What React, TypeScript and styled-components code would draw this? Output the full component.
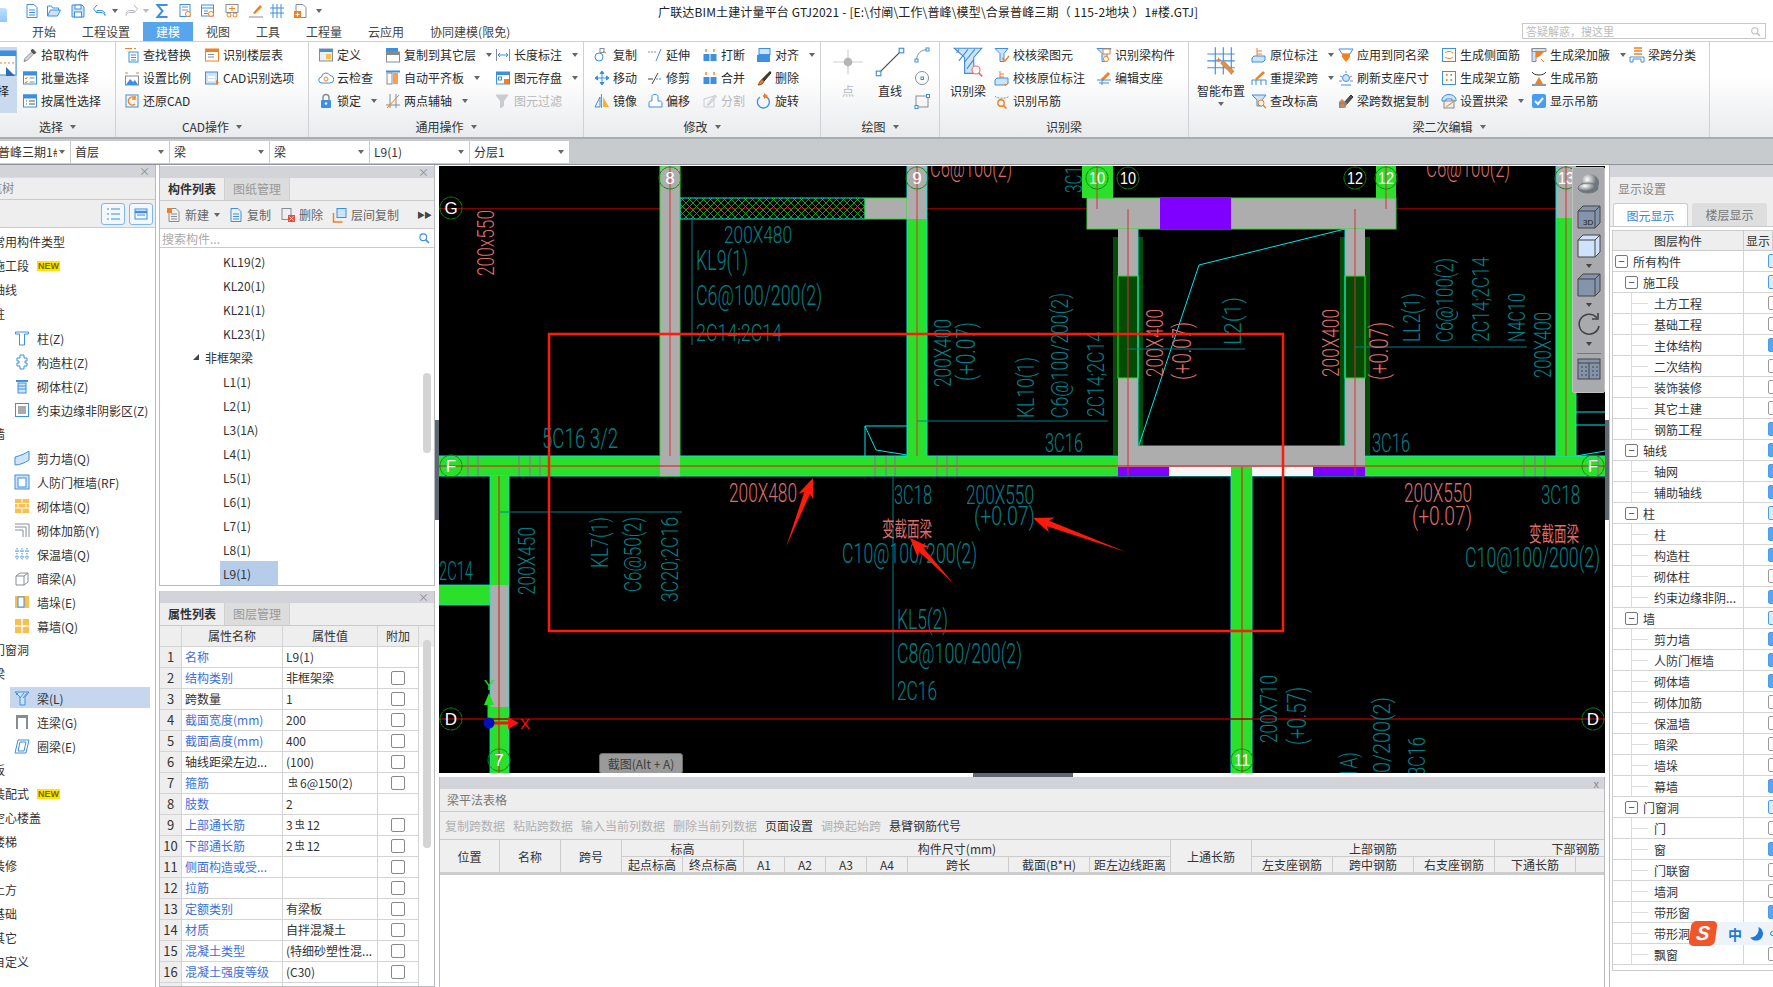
import React from "react";
import styled, { createGlobalStyle } from "styled-components";

const B = "#3d8fe0";
const L = "#cfe3f7";
const O = "#f08020";
const G = "#868c94";
const FONT = `"Noto Sans CJK SC", "Liberation Sans", sans-serif`;

const Global = createGlobalStyle`
  html, body { margin: 0; padding: 0; background: #fff; }
  body { font: 12px ${FONT}; color: #222; }
  * { box-sizing: border-box; }
`;

const ICONS: Record<string, React.ReactNode> = {
  new: <><path d="M3 1.5h7l3 3v10H3z" stroke={G} /><path d="M5 7h6M5 9.5h6M5 12h6" stroke={G} /><rect x="1" y="1" width="5" height="5" fill={O} stroke="none" /></>,
  open: <><path d="M1.5 13V3h4l1 2h6v2" stroke={B} /><path d="M1.5 13l3-6h10l-3 6z" fill={L} /></>,
  disk: <><path d="M2 2h10l2 2v10H2z" fill={L} /><rect x="5" y="2" width="6" height="4" fill="#fff" /><rect x="4.5" y="9" width="7" height="5" fill="#fff" /></>,
  undo: <><path d="M5 2L1.5 6 5 10V7.5h4c3 0 4 2 4 5-1-2-2-3-4-3H5" fill="#fff" /></>,
  redo: <path d="M11 2l3.5 4L11 10V7.5H7c-3 0-4 2-4 5 1-2 2-3 4-3h4" fill="#fff" stroke="#b8bcc2" />,
  sigma: <path d="M12.5 3V2h-9l5 6-5 6h9v-1" strokeWidth="2" />,
  sheetq: <><rect x="2" y="1.5" width="10" height="12" /><path d="M4 4h6M4 7h6" stroke={G} /><circle cx="10" cy="11" r="2.5" stroke={O} fill="#fff" /></>,
  winq: <><rect x="1.5" y="2" width="12" height="11" /><path d="M1.5 5h12M4 8h4M4 10.5h4" /><circle cx="11" cy="11" r="2.5" stroke={O} fill="#fff" /></>,
  glass: <><rect x="2" y="1.5" width="12" height="8" stroke={G} /><path d="M8 3v5M5 5.5h6" stroke={O} /><circle cx="5" cy="12" r="2" stroke={O} /><circle cx="11" cy="12" r="2" stroke={O} /></>,
  brushline: <><path d="M5 10l7-8 2 2-7 7z" fill={O} stroke="none" /><path d="M1 14h14" stroke={G} /></>,
  gridb: <path d="M1 5h14M1 10h14M4 1v14M8 1v14M12 1v14" />,
  filep: <><path d="M3 1.5h7l3 3v10H3z" stroke={G} /><rect x="1" y="8" width="7" height="7" fill={O} stroke="none" /><path d="M4.5 9.5v4M2.5 11.5h4" stroke="#fff" /></>,
  pick: <><path d="M2 14.5l1-3 6-6 2 2-6 6z" fill="#d8d8d8" stroke={G} /><path d="M9 4l1.5-2 3.5 3.5-2 1.5z" fill="#555" stroke="#555" /></>,
  batch: <><rect x="1.5" y="2" width="13" height="12" fill="#fff" /><rect x="1.5" y="2" width="13" height="3" fill={B} /><path d="M3 8l1 1 1.5-2M3 12l1 1 1.5-2" stroke={O} /><path d="M7.5 8h5M7.5 12h5" stroke={G} /></>,
  attr: <><rect x="1.5" y="2" width="13" height="12" fill="#fff" /><rect x="1.5" y="2" width="13" height="3" fill={B} /><path d="M4 8h1M4 11h1M7 8h6M7 11h6" stroke="#555" /></>,
  find: <><path d="M1 1.5h7M10 1.5h2" stroke={O} /><rect x="5" y="5" width="9" height="10" /><path d="M7 8h5M7 10.5h5M7 13h5" /></>,
  table: <><rect x="1.5" y="2" width="13" height="12" fill="#fff" stroke={O} /><rect x="1.5" y="2" width="13" height="3" fill={O} stroke="none" /><path d="M4 7.5h6M4 10h6" stroke={G} /></>,
  scale: <><path d="M1 3h3M12 3h3" stroke={O} /><rect x="1.5" y="6" width="13" height="9" stroke={G} /><path d="M2 15l4-6 3 3 2-2 3 5z" fill={B} stroke="none" /></>,
  cad: <><rect x="1.5" y="2" width="12" height="12" fill={L} /><path d="M4 7h7M4 10h7" stroke="#fff" strokeWidth="2" /><path d="M12 10v5l3-2.5z" fill={O} stroke="none" /></>,
  restore: <><rect x="2" y="2" width="12" height="12" /><path d="M11 5a4 4 0 1 0 0 6M11 3v3H8" stroke={O} strokeWidth="1.4" /></>,
  define: <><rect x="1.5" y="2" width="13" height="12" fill="#eee" stroke={G} /><rect x="1.5" y="2" width="13" height="3" fill={B} stroke="none" /><rect x="8" y="7" width="5" height="5" fill="#f5c04e" stroke="none" /></>,
  floorcopy: <><rect x="1.5" y="1.5" width="11" height="8" fill={B} /><rect x="1.5" y="5" width="13" height="10" fill="#fff" stroke={G} /><rect x="1.5" y="5" width="13" height="3" fill="#888" stroke="none" /></>,
  dim: <><path d="M1.5 2v12M14.5 2v12" stroke={G} /><path d="M3 8h10M5 6L3 8l2 2M11 6l2 2-2 2" /></>,
  cloud: <><path d="M4 13a3 3 0 0 1-.5-6A4.5 4.5 0 0 1 12 5.5 3.7 3.7 0 0 1 12 13z" fill="#fff" /><circle cx="8" cy="9" r="2" stroke={O} /></>,
  alignb: <><path d="M1 1.5h14" stroke={B} strokeWidth="2" /><rect x="2" y="3" width="5" height="11" stroke={G} /><rect x="8" y="3" width="5" height="11" fill={O} fillOpacity=".75" stroke="none" /></>,
  save: <><rect x="1.5" y="2" width="13" height="12" fill="#fff" /><rect x="1.5" y="2" width="13" height="3" fill={B} stroke="none" /><rect x="3.5" y="7" width="3" height="3" /><rect x="9" y="9" width="5" height="5" fill={O} stroke="none" /></>,
  lock: <><rect x="3" y="7" width="10" height="8" rx="1" fill={B} stroke="none" /><path d="M5 7V4.5a3 3 0 0 1 6 0V7" stroke={G} strokeWidth="1.4" /><circle cx="8" cy="10.5" r="1.2" fill="#fff" stroke="none" /></>,
  axis2: <><path d="M1 12h14M5 1v14M11 1v14" stroke={G} /><path d="M2 15L14 2" stroke={O} /></>,
  filter: <path d="M1 2h12L8.5 8v5l-3 2V8z" fill="#c8ccd0" stroke="#c8ccd0" />,
  copy: <><rect x="6" y="1.5" width="4" height="4" stroke={G} /><circle cx="5" cy="10" r="4" /><path d="M9 4l3 2" stroke={O} /></>,
  extend: <><path d="M1 5h9" stroke={G} strokeDasharray="2 1" /><path d="M9 14l5-12" stroke={B} /></>,
  breakb: <><path d="M4 2v3M12 2v3" stroke={O} strokeWidth="1.4" /><rect x="1.5" y="7" width="6" height="7" fill={B} stroke="none" /><rect x="8.5" y="7" width="6" height="7" fill={B} stroke="none" /></>,
  alignblock: <><rect x="3" y="1.5" width="11" height="6" fill={L} /><rect x="1" y="8" width="13" height="7" fill={B} stroke="none" /></>,
  move: <><path d="M8 1v14M1 8h14" /><path d="M8 1L6 3.5h4zM8 15l-2-2.5h4zM1 8l2.5-2v4zM15 8l-2.5-2v4z" fill={B} /></>,
  trim: <><path d="M1 9h5" stroke="#444" /><path d="M9 9h6" stroke={B} strokeDasharray="2 1" /><path d="M5 14l6-11" stroke="#444" /></>,
  del: <><path d="M14 1.5L6 9.5l2 1.5 7-8z" fill="#4a3a2a" stroke="#222" /><path d="M2 15c3 0 5-1 6-4l-2-1.5c-2 1-2 3-4 5.5z" fill={O} stroke="#a04010" /></>,
  mirror: <><path d="M7.5 1v14" stroke={G} /><path d="M9 4v10h6z" fill="#f7b030" stroke="none" /><path d="M6 4v10H1z" stroke={B} /></>,
  offset: <path d="M2 14V9.5c0-1 1-1.5 2-1.5h1V3.5C5 2 6 1.5 8 1.5s3 1 3 2V8h2c1 0 2 1 2 2v4z" fill="#fff" />,
  split: <><path d="M2 14V6l10-3v11z" stroke="#c8ccd0" /><path d="M5 12l8-10 1.5 1.5L7 12z" fill="#ddd" stroke="#c8ccd0" /></>,
  rotate: <><path d="M7 3a6 6 0 1 1-3 1" strokeWidth="1.3" /><path d="M8 0v6l4-3z" fill={O} stroke="none" /></>,
  point: <><path d="M13 3v20M1 13h24" stroke="#d0d0d0" /><circle cx="13" cy="13" r="3.5" fill="#b5b5b5" stroke="none" /></>,
  line: <><path d="M4 24L24 4" stroke="#444" /><rect x="22" y="2" width="4" height="4" fill="#fff" /><rect x="2" y="22" width="4" height="4" fill="#fff" /></>,
  arc: <><path d="M2.5 13C3 6 7 3 13.5 2.5" stroke={G} /><rect x="1" y="12" width="3" height="3" fill="#fff" /><rect x="12" y="1" width="3" height="3" fill="#fff" /></>,
  circ: <><circle cx="8" cy="8" r="6.5" stroke={G} /><rect x="7" y="7" width="2.5" height="2.5" fill="#fff" /></>,
  rect: <><rect x="2" y="3" width="12" height="11" stroke={G} /><rect x="12.5" y="1.5" width="3" height="3" fill="#fff" /><rect x="1" y="12.5" width="3" height="3" fill="#fff" /></>,
  beam: <><path d="M2 2h24l-7 8v14h-8V10z" fill={L} /><path d="M6 3l-2 3M14 3l-8 10M20 3l-9 11M13 20l6-8" /><circle cx="21" cy="21" r="3.5" fill="#fff" stroke="#ee7060" /><path d="M23.5 23.5l3 3" stroke="#ee7060" strokeWidth="1.5" /></>,
  beamchk: <><path d="M1 1.5h13l-4 5v8H6v-8z" fill={L} /><path d="M8 11l3 3 4-5" stroke={O} strokeWidth="1.3" /></>,
  pos: <><path d="M6 1v7M6 4h4M6 7h4" stroke={O} /><path d="M1 10l2-2h11v5l-2 2H1z" fill={L} /><path d="M10 14l2 1.5 3-3" stroke={O} /></>,
  hang: <><path d="M1 3c2 3 12 3 14 0" stroke={G} strokeDasharray="2 1" /><circle cx="7" cy="10" r="3.2" stroke={O} strokeWidth="1.4" /><path d="M9.5 12.5l3 3" stroke={O} strokeWidth="1.6" /></>,
  idbeam: <><path d="M1 1.5h14l-4 5v8H6v-8z" fill={L} /><rect x="7" y="2" width="7" height="5" fill="#fff" stroke={O} /><circle cx="10" cy="12" r="2.5" stroke={O} fill="#fff" /></>,
  brace: <><path d="M5 9l7-7 2 2-7 7z" fill={O} stroke="none" /><path d="M1 10h14M3 13h10M6 10v5" /></>,
  smart: <><path d="M2 7h24M2 13h24M2 19h24M9 1v24M16 1v24M23 1v24" /><path d="M14 15l9 9 2-2-9-9z" fill="#b0a080" stroke={O} /><path d="M12 10v4M10 12h4" stroke={O} /></>,
  yuan: <><path d="M6 1v8M6 4h5M6 7h5" stroke={O} /><path d="M1 11l2-2h11v4l-2 2H1z" fill={L} /></>,
  retake: <><path d="M4 9l8-8 2 2-8 7z" fill={O} stroke="none" /><path d="M1 10h14M1 10v5M15 10v5M5 10v5M10 10v5" /></>,
  height: <><path d="M1 2h14l-4 5v6H6V7z" fill={L} /><circle cx="10" cy="10" r="3" stroke={O} fill="#fff" /><path d="M12 12l3 3" stroke={O} strokeWidth="1.5" /></>,
  apply: <><path d="M1 2h14l-3 5H4z" fill="#fff" /><path d="M4 7h8v3l-4 5-4-5z" fill={O} stroke="none" /></>,
  refresh: <><path d="M8 1v2M2 6l2 1M14 6l-2 1M1 11h3M12 11h3" stroke={G} /><circle cx="8" cy="8" r="3.5" fill={L} /><path d="M3 15h10" /></>,
  span: <><path d="M5 11l8-9 2 2-8 9z" fill="#555" stroke="#333" /><path d="M1 9l3-3 5 5-3 4H1z" fill={O} stroke="none" /><path d="M1 10h8M2 10v5M7 10v5" /></>,
  side: <><rect x="1.5" y="1.5" width="13" height="13" /><path d="M4 6c2-2 6-2 8 0M4 10c2 2 6 2 8 0" stroke={O} /></>,
  stand: <><rect x="1.5" y="1.5" width="13" height="13" /><path d="M5 5h1.5M9.5 5H11M5 10h1.5M9.5 10H11" stroke={O} strokeWidth="2" /></>,
  arch: <><path d="M1 6c2-6 12-6 14 0v2h-4V6H5v2H1z" fill={L} /><rect x="3" y="8" width="10" height="7" fill="#eee" stroke={G} /><path d="M5 14l7-5" stroke={O} /></>,
  haunch: <><path d="M1 1.5h14v3H1zM1 1.5v13h4v-10" fill={L} stroke={G} /><path d="M5 5l9-1-5 5-4 2z" fill={O} stroke="none" /><path d="M10 12l3 3" stroke={O} /></>,
  hanger: <><path d="M1 2c2 4 12 4 14 0" stroke="#333" /><path d="M8 7l-4 7h8z" fill={O} stroke="none" /><path d="M1 15h14" stroke="#333" /></>,
  chk: <><rect x="1" y="1" width="14" height="14" rx="2" fill="#4a9cf0" stroke="none" /><path d="M4 8l3 3 5-6" stroke="#fff" strokeWidth="2" /></>,
  cat: <><path d="M5 1h8M5 4h8M5 7h8" stroke={O} strokeWidth="1.4" /><path d="M1 10h14v5h-3v-3H4v3H1z" fill="#fff" /></>,
  col: <path d="M1.5 2h13v2h-4v11H5.5V4h-4z" fill="#fff" />,
  gz: <path d="M6 1h4v3h3v3h-2v2h2v3h-3v3H6v-3H3V9h2V7H3V4h3z" fill="#fff" />,
  mz: <><path d="M2 2h12v2H2z" fill={B} stroke="none" /><rect x="4" y="5" width="8" height="10" fill={L} /><path d="M4 8h8M4 11h8" /></>,
  edge: <><rect x="1.5" y="1.5" width="13" height="13" fill="#fff" /><rect x="4" y="4" width="8" height="8" fill="#aaa" stroke="none" /></>,
  shear: <path d="M1 7c4-1 10-3 14-6v9c-4 3-10 5-14 5z" fill={L} />,
  rf: <><rect x="1" y="1" width="14" height="14" fill={L} /><rect x="4" y="4" width="8" height="9" fill="#fff" /></>,
  brick: <><rect x="1" y="1" width="14" height="14" fill="#fbbf4d" stroke="none" /><path d="M1 5.5h14M1 10h14M8 1v4.5M4 5.5V10M12 5.5V10M8 10v5" stroke="#fff" /></>,
  rein: <path d="M1 2h14v13M1 5h11v10M1 8h8v7" stroke={G} />,
  insul: <path d="M3 2v12M8 2v12M13 2v12M1 5h14M1 11h14" strokeDasharray="1.5 1" />,
  anl: <><path d="M2 6l4-3h8v9l-4 3H2z" fill="#fff" stroke={G} /><path d="M2 6h8v9M10 6l4-3" stroke={G} /></>,
  duo: <><rect x="1" y="2" width="14" height="12" fill="#fbbf4d" stroke="none" /><rect x="4" y="3" width="6" height="10" fill="#fff" stroke={B} /></>,
  mu: <><rect x="1" y="1" width="14" height="14" fill="#fbbf4d" stroke="none" /><path d="M1 8h14M8 1v14" stroke="#fff" strokeWidth="1.5" /></>,
  beaml: <><path d="M1 2h14l-4 5v8H6V7z" fill={L} /><path d="M4 3L2 5M10 3L6 8M13 3l-4 5" /></>,
  lian: <><rect x="2" y="1" width="12" height="3" fill={G} stroke="none" /><path d="M3 4v11M13 4v11" stroke={G} strokeWidth="2" /></>,
  quan: <path d="M1 15l3-13h11l-3 13zM4 13l2-9h6l-2 9z" fill="#fff" />,
  lst: <path d="M2 3h2M2 8h2M2 13h2M6 3h9M6 8h9M6 13h9" />,
  win: <><rect x="2" y="3" width="12" height="10" /><path d="M2 6h12" strokeWidth="2.5" /><path d="M4 9h8" /></>,
  doc: <><path d="M3 1.5h7l3 3v10H3z" /><path d="M5 7h6M5 9.5h6M5 12h6" /></>,
  cdel: <><rect x="2" y="1.5" width="9" height="11" stroke={G} /><rect x="8" y="8" width="7" height="7" fill="#e05040" stroke="none" /><path d="M9.5 9.5l4 4M13.5 9.5l-4 4" stroke="#fff" /></>,
  fcopy: <><path d="M1.5 6v9h9" stroke={O} strokeWidth="1.5" /><rect x="5" y="1.5" width="9" height="9" fill={L} /></>,
  search: <><circle cx="7" cy="7" r="4.5" strokeWidth="1.5" /><path d="M10.5 10.5l4 4" strokeWidth="2" /></>,
};

const Svg = styled.svg`flex: none; display: block;`;
const Icon = ({ n, s = 16, box = 16, stroke = B }: { n: string; s?: number; box?: number; stroke?: string }) => (
  <Svg width={s} height={s} viewBox={`0 0 ${box} ${box}`} fill="none" stroke={stroke}>{ICONS[n]}</Svg>
);

const Page = styled.div`
  position: relative; width: 1773px; height: 987px; overflow: hidden; background: #fff;
  display: flex; flex-direction: column;
`;

/* title */
const TitleBar = styled.div`height: 22px; flex: none; display: flex; align-items: center; background: #fff; position: relative;`;
const Logo = styled.div`width: 7px; height: 28px; top: 8px; background: linear-gradient(#bfe0ff, #62aef5); border-radius: 0 3px 3px 0; position: absolute; left: 0;`;
const Quick = styled.div`display: flex; align-items: center; margin-left: 24px; width: 634px; flex: none;`;
const QuickBtn = styled.span<{ $mr: number }>`margin-right: ${p => p.$mr}px; display: flex;`;
const Caret = styled.i<{ $c?: string; $ml?: number }>`
  display: inline-block; flex: none; width: 0; height: 0; margin-left: ${p => p.$ml ?? 7}px;
  border-left: 3.5px solid transparent; border-right: 3.5px solid transparent;
  border-top: 4px solid ${p => p.$c ?? "#666"};
`;
const TitleText = styled.div`white-space: pre; font-size: 12px; color: #222; letter-spacing: .15px;`;

/* tabs */
const TabBar = styled.div`height: 19px; flex: none; display: flex; padding-left: 19px; position: relative; background: #fff;`;
const Tab = styled.div<{ $on?: boolean }>`
  padding: 0 13px; line-height: 19px; font-size: 12px; color: ${p => (p.$on ? "#fff" : "#444")};
  background: ${p => (p.$on ? "#58a5ec" : "transparent")};
`;
const HelpBox = styled.div`
  position: absolute; left: 1522px; top: 1px; width: 244px; height: 16px; border: 1px solid #c8c8c8; background: #fff;
  color: #bbb; font-size: 11px; line-height: 14px; padding-left: 3px; display: flex; justify-content: space-between; align-items: center; padding-right: 4px;
`;

/* ribbon */
const Ribbon = styled.div`
  height: 98px; flex: none; display: flex; border-top: 1px solid #cfd1d4; border-bottom: 2px solid #a9acb0;
  background: linear-gradient(#fff 35%, #e9ebed 100%);
`;
const Group = styled.div<{ $w: number }>`
  width: ${p => p.$w}px; flex: none; display: flex; flex-direction: column; position: relative;
  margin-right: 1px; box-shadow: 1px 0 0 #d0d2d5;
`;
const Cols = styled.div<{ $pl?: number }>`height: 75px; display: flex; padding-left: ${p => p.$pl ?? 0}px; padding-top: 1px;`;
const Col = styled.div<{ $w?: number; $ml?: number }>`
  ${p => (p.$w ? `width: ${p.$w}px;` : "")} flex: none; margin-left: ${p => p.$ml ?? 0}px; display: flex; flex-direction: column;
`;
const Item = styled.div<{ $off?: boolean }>`
  height: 23px; display: flex; align-items: center; gap: 3px; white-space: nowrap;
  color: ${p => (p.$off ? "#b6b8bb" : "#2b2b2b")}; font-size: 12px;
`;
const GroupLabel = styled.div`
  height: 19px; display: flex; justify-content: center; align-items: center; color: #333; font-size: 12px;
`;
const Big = styled.div<{ $w: number }>`
  width: ${p => p.$w}px; flex: none; display: flex; flex-direction: column; align-items: center; font-size: 12px; color: #2b2b2b; white-space: nowrap;
`;
const BigIcon = styled.div`height: 32px; margin-top: 3px; margin-bottom: 1px; display: flex; align-items: center;`;
const Pressed = styled.div`
  width: 17px; height: 66px; margin: 4px 5px 0 0; flex: none; background: #c9d9ee; overflow: hidden; display: flex; flex-direction: column;
  align-items: flex-end; font-size: 12px; position: relative;
`;
const PressedIcon = styled.div`margin: 2px 0 0; height: 30px;`;
const PressedGlyph = styled.span`position: absolute; left: -3px; bottom: 15px; line-height: 14px;`;

/* combos */
const ComboBar = styled.div`height: 26px; flex: none; background: #c8cbce; display: flex; align-items: center; gap: 1px; overflow: hidden; border-bottom: 1px solid #8f9296;`;
const Combo = styled.div<{ $w: number; $ml?: number }>`
  width: ${p => p.$w}px; height: 22px; flex: none; margin-left: ${p => p.$ml ?? 0}px; background: #fff; display: flex; align-items: center;
  justify-content: space-between; padding: 0 5px 0 4px; color: #333; font-size: 12px;
`;
const ComboText = styled.span`overflow: hidden; white-space: nowrap;`;

/* main */
const Main = styled.div`flex: 1; display: flex; position: relative; min-height: 0;`;
const Handle = styled.div<{ $x: number }>`position: absolute; left: ${p => p.$x}px; top: 255px; width: 4px; height: 100px; background: #5d6873;`;
const Strip = styled.div`height: 12px; flex: none; background: #d2d4d9; display: flex; justify-content: flex-end; align-items: center; padding-right: 5px; color: #8a8a8a; font-size: 11px; line-height: 12px;`;
const LeftPanel = styled.div`width: 156px; flex: none; border-right: 1px solid #b8babd; display: flex; flex-direction: column; overflow: hidden; margin-right: 3px;`;
const PanelHead = styled.div`height: 23px; flex: none; background: #eee; border-top: 1px solid #ddd; border-bottom: 1px solid #c8cacc; color: #888; line-height: 20px; text-indent: -22px; white-space: nowrap;`;
const LeftTools = styled.div`height: 28px; flex: none; background: #eee; border-bottom: 1px solid #c8cacc; display: flex; justify-content: flex-end; align-items: center; gap: 4px; padding-right: 2px;`;
const ToolBtn = styled.div`width: 24px; height: 22px; border: 1px solid #7db8f0; border-radius: 3px; background: #f2f8fe; display: flex; align-items: center; justify-content: center;`;
const Tree = styled.div`flex: 1; padding-top: 2px; overflow: hidden;`;
const TreeHead = styled.div`height: 24px; line-height: 24px; margin-left: -7px; white-space: nowrap; color: #333; display: flex; align-items: center; gap: 8px;`;
const New = styled.span`font: bold 9px "Liberation Sans", sans-serif; background: #ffe400; color: #7a6a00; padding: 0 1px; line-height: 10px;`;
const TreeItem = styled.div<{ $on?: boolean }>`
  height: 24px; margin-left: 10px; width: 140px; padding-left: 4px; display: flex; align-items: center; gap: 7px; white-space: nowrap; color: #333;
  background: ${p => (p.$on ? "linear-gradient(transparent 1px, #c5d6ee 1px, #c5d6ee 22px, transparent 22px)" : "transparent")};
`;

const MidColumn = styled.div`width: 276px; flex: none; display: flex; flex-direction: column; gap: 5px; margin-right: 4px;`;
const MidPanel = styled.div<{ $h?: number }>`
  ${p => (p.$h ? `height: ${p.$h}px; padding-top: 1px;` : "flex: 1;")} display: flex; flex-direction: column; position: relative; overflow: hidden;
  border-left: 1px solid #b8babd; border-right: 1px solid #b8babd; border-bottom: 1px solid #b8babd;
`;
const TabRow = styled.div`height: 23px; flex: none; background: #eee; display: flex; border-bottom: 1px solid #c8cacc;`;
const PTab = styled.div<{ $on?: boolean }>`
  width: 65px; text-align: center; line-height: 22px; font-weight: ${p => (p.$on ? 700 : 400)};
  color: ${p => (p.$on ? "#333" : "#999")}; background: ${p => (p.$on ? "#eee" : "#dcdcdc")}; border-right: 1px solid #d0d0d0;
`;
const MidTools = styled.div`height: 28px; flex: none; background: #efefef; border-bottom: 1px solid #c8cacc; display: flex; align-items: center; padding: 0 4px 0 6px; color: #666; position: relative;`;
const MidTool = styled.div<{ $w: number }>`width: ${p => p.$w}px; flex: none; display: flex; align-items: center; gap: 3px;`;
const More = styled.span`position: absolute; right: 3px; font-size: 8px; color: #444; letter-spacing: -1px;`;
const SearchRow = styled.div`height: 19px; flex: none; border-bottom: 1px solid #c8cacc; display: flex; align-items: center; justify-content: space-between; padding: 0 4px 0 2px; color: #aaa; background: #fff;`;
const List = styled.div`flex: 1; padding-top: 1px; overflow: hidden;`;
const ListRow = styled.div<{ $on?: boolean; $head?: boolean }>`
  height: 24px; margin-left: ${p => (p.$head ? "30px" : "60px")}; width: ${p => (p.$head ? "auto" : "58px")}; padding-left: 3px; display: flex; align-items: center; gap: 6px;
  color: #333; background: ${p => (p.$on ? "#b5cceb" : "transparent")}; white-space: nowrap;
`;
const Tri = styled.i`display: block; width: 0; height: 0; border-bottom: 6px solid #444; border-left: 6px solid transparent;`;
const Thumb = styled.div<{ $t: number; $h: number }>`position: absolute; right: 3px; top: ${p => p.$t}px; height: ${p => p.$h}px; width: 8px; border-radius: 4px; background: #d4d4d4;`;

const PropHead = styled.div`display: grid; grid-template-columns: 22px 101px 95px 41px; height: 21px; flex: none; background: #eee;`;
const HCell = styled.div`border-right: 1px solid #d4d4d4; border-bottom: 1px solid #d4d4d4; text-align: center; line-height: 20px; color: #333;`;
const PropRow = styled.div`display: grid; grid-template-columns: 22px 101px 95px 41px; height: 21px; flex: none; width: 259px;`;
const Num = styled.div`background: #eee; text-align: center; line-height: 20px; border-right: 1px solid #d4d4d4; border-bottom: 1px solid #d4d4d4; color: #333; font-size: 13px;`;
const Cell = styled.div<{ $blue?: boolean }>`
  border-right: 1px solid #d4d4d4; border-bottom: 1px solid #d4d4d4; line-height: 20px; padding-left: 3px; white-space: nowrap; overflow: hidden;
  color: ${p => (p.$blue ? "#3a6fe0" : "#333")};
`;
const CheckCell = styled.div`border-right: 1px solid #d4d4d4; border-bottom: 1px solid #d4d4d4; display: flex; align-items: center; justify-content: center;`;
const Box = styled.i`display: block; width: 14px; height: 14px; border: 1px solid #888; border-radius: 2px; background: #fff;`;
const Rebar = styled.span`font-size: 10px; position: relative; top: -2px; margin: 0 2px;`;

const Center = styled.div`width: 1166px; flex: none; display: flex; flex-direction: column; gap: 4px; padding-top: 1px; margin-right: 4px; position: relative;`;
const Canvas = styled.div`height: 607px; flex: none; background: #000; position: relative; overflow: hidden;`;
const CadSvg = styled.svg`display: block;`;
const ViewBar = styled.div`
  position: absolute; right: 0; top: 1px; width: 33px; height: 226px; background: #a8aaad; border: 1px solid #c0c0c0; border-radius: 2px;
  display: flex; flex-direction: column; align-items: center; padding-top: 3px;
`;
const ViewBtn = styled.div<{ $h: number }>`height: ${p => p.$h}px; flex: none; display: flex; align-items: center; justify-content: center;`;
const ViewSep = styled.div`width: 24px; height: 1px; flex: none; background: #777;`;
const Tip = styled.div`
  position: absolute; left: 160px; bottom: -1px; width: 84px; height: 21px; background: #9a9a9a; border: 1px solid #6c6c6c; border-radius: 3px;
  color: #3c3c3c; text-align: center; line-height: 19px; box-shadow: 1px 2px 2px rgba(0,0,0,.3); font-size: 12px;
`;
const Grip = styled.div`position: absolute; left: 534px; top: 608px; width: 100px; height: 4px; background: #5d6873;`;
const Bottom = styled.div`flex: 1; display: flex; flex-direction: column; overflow: hidden; border-left: 1px solid #b8babd; border-right: 1px solid #b8babd; min-height: 0;`;
const BHead = styled.div`height: 23px; flex: none; background: #eee; border-bottom: 1px solid #c8cacc; color: #777; line-height: 21px; padding-left: 7px;`;
const BTools = styled.div`height: 28px; flex: none; background: #eee; border-bottom: 1px solid #c8cacc; display: flex; align-items: center; gap: 8px; padding-left: 5px;`;
const BTool = styled.span<{ $on?: boolean }>`color: ${p => (p.$on ? "#333" : "#b0b0b0")}; white-space: nowrap;`;
const Matrix = styled.div`
  height: 35px; flex: none; background: #efefef; border-bottom: 2px solid #ccc; display: grid; overflow: hidden;
  grid-template-columns: 60px 61px 61px 61px 61px 41px 41px 41px 41px 101px 81px 81px 81px 81px 81px 81px 81px 81px;
  grid-template-rows: 17px 16px;
`;
const MCell = styled.div<{ $c?: string; $r?: string }>`
  grid-column: ${p => p.$c ?? "auto"}; grid-row: ${p => p.$r ?? "auto"};
  border-right: 1px solid #ccc; border-bottom: 1px solid #ccc; display: flex; align-items: center; justify-content: center; white-space: nowrap; overflow: hidden; color: #333; font-size: 12px;
`;

const RightPanel = styled.div`flex: 1; min-width: 0; border-left: 1px solid #b8babd; display: flex; flex-direction: column; overflow: hidden;`;
const RHead = styled.div`height: 24px; flex: none; background: #eee; color: #888; line-height: 24px; padding-left: 8px; font-size: 12px;`;
const RTabs = styled.div`height: 26px; flex: none; background: #eee; display: flex; padding: 2px 0 0 3px; gap: 4px; border-bottom: 1px solid #c8cacc;`;
const RTab = styled.div<{ $on?: boolean }>`
  width: 75px; text-align: center; line-height: 23px; border-radius: 3px 3px 0 0; color: ${p => (p.$on ? "#3b87e0" : "#777")};
  background: ${p => (p.$on ? "#fff" : "#dedede")}; border: ${p => (p.$on ? "1px solid #ccc" : "none")}; border-bottom: none;
`;
const LayerTable = styled.div`margin: 3px 0 0 2px; border: 1px solid #ccc; border-right: none; height: 741px; overflow: hidden;`;
const LayerHead = styled.div`height: 20px; background: #eee; display: grid; grid-template-columns: 131px 1fr; border-bottom: 1px solid #ccc; line-height: 19px; text-align: center; color: #333;`;
const LayerHCell = styled.div`border-right: 1px solid #ccc; white-space: nowrap; overflow: hidden;`;
const LayerRow = styled.div`height: 21px; display: grid; grid-template-columns: 131px 1fr; border-bottom: 1px solid #d4d4d4;`;
const LayerName = styled.div<{ $lv: number }>`
  position: relative; border-right: 1px solid #d4d4d4; display: flex; align-items: center; gap: 5px; color: #333; white-space: nowrap;
  padding-left: ${p => [2, 12, 41][p.$lv]}px;
  &::before {
    content: ${p => (p.$lv === 2 ? '""' : "none")}; position: absolute; left: 18px; top: 10px; width: 17px; height: 1px; background: #ddd;
  }
  &::after {
    content: ${p => (p.$lv === 2 ? '""' : "none")}; position: absolute; left: 18px; top: 0; width: 1px; height: 21px; background: #ddd;
  }
`;
const Minus = styled.i`
  display: flex; align-items: center; justify-content: center; width: 13px; height: 13px; border: 1px solid #777; border-radius: 2px; background: #fff;
  font-style: normal; font-size: 11px; line-height: 1; color: #333; flex: none;
`;
const LayerCheck = styled.div`padding-left: 24px; display: flex; align-items: center;`;
const Mark = styled.i<{ $s: number }>`
  display: block; width: 14px; height: 14px; border-radius: 2px; flex: none;
  border: 1px solid ${p => (p.$s === 0 ? "#999" : "#4a9cf0")};
  background: ${p => (p.$s === 1 ? "#5aa4f4" : p.$s === 2 ? "#dbeafc" : "#fff")};
`;
const Ime = styled.div`
  position: absolute; left: 1690px; top: 920px; width: 83px; height: 27px; display: flex; align-items: center;
`;
const ImeLogo = styled.div`
  width: 26px; height: 25px; background: #f0562a; border-radius: 5px; transform: skew(-8deg); color: #fff; font: italic bold 20px "Liberation Sans", sans-serif;
  display: flex; align-items: center; justify-content: center; flex: none; z-index: 1;
`;
const ImeBar = styled.div`
  margin-left: -3px; flex: 1; height: 23px; background: #eef3fa; display: flex; align-items: center; gap: 7px; padding-left: 15px; color: #1e78dc; font-weight: 700; font-size: 14px; white-space: nowrap;
`;
const ImeDot = styled.i`width: 5px; height: 5px; border: 1.5px solid #1e78dc; border-radius: 50%; display: block; flex: none;`;

/* ---------- data ---------- */
type It = [string, string, number?];
const col = (items: It[], w?: number, ml?: number) => (
  <Col $w={w} $ml={ml}>
    {items.map(([ic, t, f]) => (
      <Item key={ic + t} $off={f === 2}>
        <Icon n={ic} />
        {t}
        {f === 1 && <Caret />}
      </Item>
    ))}
  </Col>
);

const big = (ic: string, t: string, w: number, box = 28, off = false, drop = false) => (
  <Big $w={w}>
    <BigIcon><Icon n={ic} s={32} box={box} /></BigIcon>
    <Item $off={off}>{t}</Item>
    {drop && <Caret $ml={0} />}
  </Big>
);

const leftTree: [number, string, string?, boolean?][] = [
  [0, "常用构件类型"], [2, "施工段"], [0, "轴线"], [0, "柱"],
  [1, "柱(Z)", "col"], [1, "构造柱(Z)", "gz"], [1, "砌体柱(Z)", "mz"], [1, "约束边缘非阴影区(Z)", "edge"],
  [0, "墙"], [1, "剪力墙(Q)", "shear"], [1, "人防门框墙(RF)", "rf"], [1, "砌体墙(Q)", "brick"], [1, "砌体加筋(Y)", "rein"],
  [1, "保温墙(Q)", "insul"], [1, "暗梁(A)", "anl"], [1, "墙垛(E)", "duo"], [1, "幕墙(Q)", "mu"],
  [0, "门窗洞"], [0, "梁"], [1, "梁(L)", "beaml", true], [1, "连梁(G)", "lian"], [1, "圈梁(E)", "quan"],
  [0, "板"], [2, "装配式"], [0, "空心楼盖"], [0, "楼梯"], [0, "装修"], [0, "土方"], [0, "基础"], [0, "其它"], [0, "自定义"],
];

const R = <Rebar>虫</Rebar>;
const props: [string, string, boolean, React.ReactNode, boolean][] = [
  ["1", "名称", true, "L9(1)", false],
  ["2", "结构类别", true, "非框架梁", true],
  ["3", "跨数量", false, "1", true],
  ["4", "截面宽度(mm)", true, "200", true],
  ["5", "截面高度(mm)", true, "400", true],
  ["6", "轴线距梁左边...", false, "(100)", true],
  ["7", "箍筋", true, <>{R}6@150(2)</>, true],
  ["8", "肢数", true, "2", false],
  ["9", "上部通长筋", true, <>3{R}12</>, true],
  ["10", "下部通长筋", true, <>2{R}12</>, true],
  ["11", "侧面构造或受...", true, "", true],
  ["12", "拉筋", true, "", true],
  ["13", "定额类别", true, "有梁板", true],
  ["14", "材质", true, "自拌混凝土", true],
  ["15", "混凝土类型", true, "(特细砂塑性混...", true],
  ["16", "混凝土强度等级", true, "(C30)", true],
  ["", "", false, "", true],
];

const layers: [number, string, number][] = [
  [0, "所有构件", 2], [1, "施工段", 2], [2, "土方工程", 0], [2, "基础工程", 0], [2, "主体结构", 1], [2, "二次结构", 0], [2, "装饰装修", 0], [2, "其它土建", 0], [2, "钢筋工程", 1],
  [1, "轴线", 1], [2, "轴网", 1], [2, "辅助轴线", 1],
  [1, "柱", 2], [2, "柱", 1], [2, "构造柱", 1], [2, "砌体柱", 0], [2, "约束边缘非阴...", 1],
  [1, "墙", 2], [2, "剪力墙", 1], [2, "人防门框墙", 1], [2, "砌体墙", 1], [2, "砌体加筋", 0], [2, "保温墙", 0], [2, "暗梁", 0], [2, "墙垛", 0], [2, "幕墙", 1],
  [1, "门窗洞", 2], [2, "门", 0], [2, "窗", 1], [2, "门联窗", 0], [2, "墙洞", 0], [2, "带形窗", 1], [2, "带形洞", 0], [2, "飘窗", 0],
];

/* ---------- CAD drawing, in page coordinates ---------- */
const TEAL = "#008088";
const SAL = "#dc6e6a";
const CFONT = "Roboto, 'Liberation Sans', sans-serif";
const CJKF = "'Liberation Serif', 'Noto Sans CJK SC', serif";

const T = ({ x, y, w, h, c = TEAL, t }: { x: number; y: number; w: number; h: number; c?: string; t: string }) => (
  <text x={x} y={y} fontSize={h * 1.38} fontFamily={CFONT} fontWeight={300} fill={c} textLength={w} lengthAdjust="spacingAndGlyphs">{t}</text>
);
/* text running bottom-to-top, centred on line x, from y2 (start) up to y1 (end) */
const V = ({ x, y1, y2, h = 18, c = TEAL, t }: { x: number; y1: number; y2: number; h?: number; c?: string; t: string }) => {
  const bx = x + h / 2;
  return (
    <text transform={`rotate(-90 ${bx} ${y2})`} x={bx} y={y2} fontSize={h * 1.38} fontFamily={CFONT} fontWeight={300} fill={c} textLength={y2 - y1} lengthAdjust="spacingAndGlyphs">{t}</text>
  );
};
const Axis = ({ x, y, t }: { x: number; y: number; t: string }) => (
  <g>
    <circle cx={x} cy={y} r={11} fill="none" stroke="#0a8a0a" strokeDasharray="5.5 .6" />
    <text x={x} y={y + 6} fontSize={17} fontFamily="'Liberation Sans', sans-serif" fill="#fff" textAnchor="middle" textLength={t.length > 1 ? 16 : undefined} lengthAdjust="spacingAndGlyphs">{t}</text>
  </g>
);
const arrow = (tx: number, ty: number, bx: number, by: number) => {
  const len = Math.hypot(tx - bx, ty - by);
  const dx = (tx - bx) / len, dy = (ty - by) / len;
  const nx = -dy, ny = dx;
  const p = (a: number, n: number) => `${(tx - dx * a + nx * n).toFixed(1)},${(ty - dy * a + ny * n).toFixed(1)}`;
  return [p(0, 0), p(20, 8), p(16, 3), `${bx},${by}`, p(16, -3), p(20, -8)].join(" ");
};
const GREEN = "#2be02b";
const GRAY = "#adadad";
const CYAN = "#00e6e6";
const RED = "#e01010";
const DRED = "#a00000";

const Drawing = () => (
  <CadSvg width={1166} height={607} viewBox="439 166 1166 607">
    <defs>
      <pattern id="hatch" width="7" height="7" patternUnits="userSpaceOnUse">
        <path d="M0 0l7 7M7 0L0 7" stroke="#23c023" strokeWidth=".8" />
      </pattern>
    </defs>
    <path d="M439 208.7H1575" stroke={DRED} />
    <rect x={439} y={456} width={1166} height={20} fill={GREEN} />
    <path d="M439 456H1605M439 476H1605" stroke={CYAN} />
    <rect x={660} y={166} width={20} height={310} fill={GRAY} stroke={GREEN} />
    <rect x={680} y={198} width={185} height={21} fill="url(#hatch)" stroke={CYAN} />
    <path d="M865 198H907V219H865z" fill={GRAY} stroke={GREEN} />
    <rect x={907} y={219} width={20} height={240} fill={GREEN} />
    <rect x={907} y={166} width={20} height={53} fill={GRAY} />
    <path d="M907 166V198M907 219V456M927 166V456" stroke={CYAN} />
    <rect x={1082} y={166} width={31} height={32} fill={GREEN} />
    <rect x={1376} y={166} width={20} height={32} fill={GREEN} />
    <rect x={1113} y={237} width={5} height={218} fill="#054a05" />
    <rect x={1138} y={237} width={5} height={209} fill="#054a05" />
    <rect x={1340} y={237} width={5} height={209} fill="#054a05" />
    <rect x={1365} y={237} width={5} height={218} fill="#054a05" />
    <rect x={1087} y={198} width={309} height={31} fill={GRAY} stroke={GREEN} />
    <rect x={1160} y={198} width={71} height={31} fill="#8000ff" />
    <rect x={1118} y={229} width={20} height={247} fill={GRAY} />
    <rect x={1345} y={229} width={20} height={247} fill={GRAY} />
    <rect x={1118} y={276} width={20} height={102} fill="#054a05" stroke={GREEN} />
    <rect x={1345} y={276} width={20} height={102} fill="#054a05" stroke={GREEN} />
    <path d="M1138 229V446H1345V229" fill="none" stroke={CYAN} />
    <rect x={1118} y={446} width={247} height={21} fill={GRAY} />
    <rect x={1118} y={467} width={51} height={9} fill="#8000ff" />
    <rect x={1169} y={467} width={144} height={9} fill="#f6f6f6" />
    <rect x={1313} y={467} width={52} height={9} fill="#8000ff" />
    <rect x={660} y={456} width={20} height={20} fill={GRAY} />
    <rect x={490} y={476} width={19} height={297} fill={GREEN} />
    <rect x={490} y={585} width={19} height={122} fill={GRAY} />
    <rect x={439} y={585} width={51} height={20} fill={GREEN} />
    <path d="M490 476V773M509 476V773M439 605H490M439 585H490" stroke={CYAN} strokeWidth=".8" />
    <rect x={1231} y={467} width={21} height={306} fill={GREEN} />
    <path d="M1231 476V773M1252 476V773" stroke={CYAN} />
    <rect x={1556} y={218} width={20} height={238} fill={GREEN} />
    <rect x={1556} y={166} width={20} height={52} fill={GRAY} />
    <path d="M1556 166V456M1576 393V456M1576 412H1605M1576 425H1605" stroke={CYAN} />
    <path d="M1576 456l29-5" stroke={CYAN} />
    <g stroke="#d43030" fill="none">
      <path d="M670 166V456M917 166V456M1128 209V476M1355 209V476M1097 166V209M1386 166V209M1566 166V456" />
      <path d="M499 476V773M1242 467V773" stroke={RED} />
    </g>
    <path d="M439 466H1605" stroke={RED} />
    <path d="M439 719H1605" stroke={DRED} strokeWidth="1.5" />
    <path d="M468 456v20M478 456v20M519 456v20M530 456v20M540 456v20M875 456v20M886 456v20M895 456v20M937 456v20M947 456v20M957 456v20M1524 456v20M1535 456v20M1545 456v20M1598 456v20" stroke="#c040c0" strokeWidth=".8" />
    <path d="M1345 229L1199 265L1139 445" fill="none" stroke={CYAN} />
    <path d="M865 426H907M865 426L876 450L907 455M865 426V456" fill="none" stroke={CYAN} />
    <g stroke={TEAL}>
      <path d="M692 219V345M917 421H1108M1127 349H1245M1355 347H1527M893 476V700M500 512H682" />
    </g>
    <T x={724} y={243} w={68} h={18} t="200X480" />
    <T x={696} y={270} w={52} h={20} t="KL9(1)" />
    <T x={696} y={305} w={126} h={20} t="C6@100/200(2)" />
    <T x={696} y={341} w={86} h={18} t="2C14;2C14" />
    <T x={542} y={448} w={76} h={20} t="5C16 3/2" />
    <V x={942} y1={319} y2={387} t="200X400" />
    <V x={965} y1={322} y2={381} h={19} t="(+0.07)" />
    <V x={1025} y1={357} y2={418} t="KL10(1)" />
    <V x={1059} y1={293} y2={418} t="C6@100/200(2)" />
    <V x={1095} y1={332} y2={417} t="2C14;2C14" />
    <T x={1045} y={452} w={38} h={19} t="3C16" />
    <V x={1232} y1={297} y2={345} t="L2(1)" />
    <V x={1411} y1={293} y2={342} t="LL2(1)" />
    <V x={1444} y1={258} y2={342} t="C6@100(2)" />
    <V x={1480} y1={257} y2={342} t="2C14;2C14" />
    <V x={1516} y1={293} y2={342} t="N4C10" />
    <V x={1542} y1={312} y2={378} t="200X400" />
    <T x={1372} y={452} w={38} h={19} t="3C16" />
    <V x={1073} y1={166} y2={193} t="3C1" />
    <T x={894} y={504} w={38} h={19} t="3C18" />
    <T x={966} y={504} w={68} h={19} t="200X550" />
    <T x={974} y={525} w={61} h={19} t="(+0.07)" />
    <T x={842} y={563} w={135} h={20} t="C10@100/200(2)" />
    <T x={897} y={629} w={51} h={20} t="KL5(2)" />
    <T x={897} y={663} w={125} h={20} t="C8@100/200(2)" />
    <T x={897} y={700} w={40} h={19} t="2C16" />
    <V x={526} y1={527} y2={595} t="200X450" />
    <V x={599} y1={517} y2={568} t="KL7(1)" />
    <V x={632} y1={517} y2={592} t="C6@50(2)" />
    <V x={669} y1={517} y2={602} t="3C20;2C16" />
    <T x={439} y={580} w={34} h={19} t="2C14" />
    <T x={1541} y={504} w={39} h={19} t="3C18" />
    <T x={1465} y={567} w={135} h={20} t="C10@100/200(2)" />
    <V x={1268} y1={675} y2={743} t="200X710" />
    <V x={1296} y1={687} y2={745} h={19} t="(+0.57)" />
    <V x={1381} y1={697} y2={773} t="0/200(2)" />
    <V x={1348} y1={752} y2={778} t="1A)" />
    <V x={1416} y1={737} y2={776} t="3C16" />
    <V x={485} y1={210} y2={276} h={18} c={SAL} t="200x550" />
    <T x={930} y={177} w={82} h={19} c={SAL} t="C6@100(2)" />
    <T x={1426} y={177} w={84} h={19} c={SAL} t="C6@100(2)" />
    <V x={1154} y1={309} y2={377} c={SAL} t="200X400" />
    <V x={1181} y1={322} y2={380} h={19} c={SAL} t="(+0.07)" />
    <V x={1330} y1={309} y2={377} c={SAL} t="200X400" />
    <V x={1378} y1={322} y2={380} h={19} c={SAL} t="(+0.07)" />
    <T x={729} y={502} w={68} h={19} c={SAL} t="200X480" />
    <T x={1404} y={502} w={68} h={19} c={SAL} t="200X550" />
    <T x={1412} y={525} w={60} h={19} c={SAL} t="(+0.07)" />
    <text x={882} y={536} fontSize={21} fontFamily={CJKF} fill={SAL} textLength={50} lengthAdjust="spacingAndGlyphs">变截面梁</text>
    <text x={1529} y={541} fontSize={21} fontFamily={CJKF} fill={SAL} textLength={50} lengthAdjust="spacingAndGlyphs">变截面梁</text>
    <rect x={549} y={334} width={734} height={297} fill="none" stroke="#ff1a0a" strokeWidth="2.5" />
    <polygon points={arrow(813, 478, 786, 547)} fill="#ff1a0a" />
    <polygon points={arrow(910, 538, 953, 583)} fill="#ff1a0a" />
    <polygon points={arrow(1033, 518, 1126, 552)} fill="#ff1a0a" />
    <Axis x={451} y={208} t="G" />
    <Axis x={451} y={466} t="F" />
    <Axis x={451} y={719} t="D" />
    <Axis x={670} y={178} t="8" />
    <Axis x={917} y={178} t="9" />
    <Axis x={1097} y={178} t="10" />
    <Axis x={1128} y={178} t="10" />
    <Axis x={1355} y={178} t="12" />
    <Axis x={1386} y={178} t="12" />
    <Axis x={1566} y={178} t="13" />
    <Axis x={499} y={760} t="7" />
    <Axis x={1242} y={760} t="11" />
    <Axis x={1593} y={466} t="F" />
    <Axis x={1593} y={719} t="D" />
    <path d="M489 723V702" stroke="#20e020" strokeWidth="3" />
    <path d="M484 705L489 693L494 705z" fill="#20e020" />
    <path d="M489 723H510" stroke="#ff1010" strokeWidth="3" />
    <path d="M508 717L519 723L508 729z" fill="#ff1010" />
    <circle cx={489} cy={723} r={5.5} fill="#0010c0" />
    <text x={484} y={690} fontSize={15} fontFamily="'Liberation Sans', sans-serif" fill="#20e020">Y</text>
    <text x={520} y={729} fontSize={15} fontFamily="'Liberation Sans', sans-serif" fill="#ff1010">X</text>
  </CadSvg>
);

const Cube = ({ fill, label }: { fill: string; label?: string }) => (
  <Svg width={26} height={26} viewBox="0 0 26 26">
    <path d="M2 7l5-5h17v17l-5 5H2z" fill={fill} stroke="#444" />
    <path d="M2 7h17v17M19 7l5-5" fill="none" stroke="#444" />
    {label && <text x={7} y={21} fontSize={8} fontFamily="'Liberation Sans', sans-serif" fill="#222">{label}</text>}
  </Svg>
);

const heads: [string, string?, string?][] = [
  ["位置", "1", "1 / 3"], ["名称", "2", "1 / 3"], ["跨号", "3", "1 / 3"], ["标高", "4 / 6", "1"], ["构件尺寸(mm)", "6 / 13", "1"],
  ["上通长筋", "13", "1 / 3"], ["上部钢筋", "14 / 17", "1"], ["下部钢筋", "17 / 19", "1"],
  ["起点标高", "4", "2"], ["终点标高", "5", "2"], ["A1", "6", "2"], ["A2", "7", "2"], ["A3", "8", "2"], ["A4", "9", "2"], ["跨长", "10", "2"],
  ["截面(B*H)", "11", "2"], ["距左边线距离", "12", "2"], ["左支座钢筋", "14", "2"], ["跨中钢筋", "15", "2"], ["右支座钢筋", "16", "2"], ["下通长筋", "17", "2"], ["", "18", "2"],
];

export default function App() {
  return (
    <Page>
      <Global />
      <TitleBar>
        <Logo />
        <Quick>
          <QuickBtn $mr={6}><Icon n="doc" /></QuickBtn>
          <QuickBtn $mr={8}><Icon n="open" /></QuickBtn>
          <QuickBtn $mr={6}><Icon n="disk" /></QuickBtn>
          <QuickBtn $mr={0}><Icon n="undo" /></QuickBtn>
          <QuickBtn $mr={5}><Caret $ml={4} /></QuickBtn>
          <QuickBtn $mr={0}><Icon n="redo" /></QuickBtn>
          <QuickBtn $mr={5}><Caret $ml={4} $c="#bbb" /></QuickBtn>
          <QuickBtn $mr={8}><Icon n="sigma" /></QuickBtn>
          <QuickBtn $mr={6}><Icon n="sheetq" /></QuickBtn>
          <QuickBtn $mr={8}><Icon n="winq" /></QuickBtn>
          <QuickBtn $mr={8}><Icon n="glass" /></QuickBtn>
          <QuickBtn $mr={5}><Icon n="brushline" /></QuickBtn>
          <QuickBtn $mr={8}><Icon n="gridb" /></QuickBtn>
          <QuickBtn $mr={7}><Icon n="filep" /></QuickBtn>
          <QuickBtn $mr={0}><Caret $ml={0} /></QuickBtn>
        </Quick>
        <TitleText>广联达BIM土建计量平台 GTJ2021 - [E:\付阐\工作\普峰\模型\合景普峰三期（ 115-2地块 ）1#楼.GTJ]</TitleText>
      </TitleBar>
      <TabBar>
        {["开始", "工程设置", "建模", "视图", "工具", "工程量", "云应用", "协同建模(限免)"].map(t => (
          <Tab key={t} $on={t === "建模"}>{t}</Tab>
        ))}
        <HelpBox>答疑解惑，搜这里<Icon n="search" s={11} stroke="#bbb" /></HelpBox>
      </TabBar>
      <Ribbon>
        <Group $w={115}>
          <Cols>
            <Pressed>
              <PressedIcon>
                <Svg width={17} height={30} viewBox="0 0 17 30">
                  <rect x="-8" y="2" width="24" height="24" fill="#fff" stroke={B} />
                  <rect x="-8" y="2" width="24" height="5" fill={B} />
                  <path d="M-8 14h22" stroke={O} strokeDasharray="2 2" />
                  <path d="M6 18l9 9H6z" fill="#2a6fb5" />
                </Svg>
              </PressedIcon>
              <PressedGlyph>择</PressedGlyph>
            </Pressed>
            {col([["pick", "拾取构件"], ["batch", "批量选择"], ["attr", "按属性选择"]])}
          </Cols>
          <GroupLabel>选择<Caret /></GroupLabel>
        </Group>
        <Group $w={192}>
          <Cols $pl={8}>
            {col([["find", "查找替换"], ["scale", "设置比例"], ["restore", "还原CAD"]], 80)}
            {col([["table", "识别楼层表"], ["cad", "CAD识别选项"]])}
          </Cols>
          <GroupLabel>CAD操作<Caret /></GroupLabel>
        </Group>
        <Group $w={274}>
          <Cols $pl={9}>
            {col([["define", "定义"], ["cloud", "云检查"], ["lock", "锁定", 1]], 67)}
            {col([["floorcopy", "复制到其它层", 1], ["alignb", "自动平齐板", 1], ["axis2", "两点辅轴", 1]], 110)}
            {col([["dim", "长度标注", 1], ["save", "图元存盘", 1], ["filter", "图元过滤", 2]])}
          </Cols>
          <GroupLabel>通用操作<Caret /></GroupLabel>
        </Group>
        <Group $w={236}>
          <Cols $pl={10}>
            {col([["copy", "复制"], ["move", "移动"], ["mirror", "镜像"]], 53)}
            {col([["extend", "延伸"], ["trim", "修剪"], ["offset", "偏移"]], 55)}
            {col([["breakb", "打断"], ["breakb", "合并"], ["split", "分割", 2]], 54)}
            {col([["alignblock", "对齐", 1], ["del", "删除"], ["rotate", "旋转"]])}
          </Cols>
          <GroupLabel>修改<Caret /></GroupLabel>
        </Group>
        <Group $w={118}>
          <Cols>
            {big("point", "点", 54, 26, true)}
            {big("line", "直线", 30)}
            {col([["arc", ""], ["circ", ""], ["rect", ""]], undefined, 9)}
          </Cols>
          <GroupLabel>绘图<Caret /></GroupLabel>
        </Group>
        <Group $w={248}>
          <Cols $pl={2}>
            {big("beam", "识别梁", 52)}
            {col([["beamchk", "校核梁图元"], ["pos", "校核原位标注"], ["hang", "识别吊筋"]], 102)}
            {col([["idbeam", "识别梁构件"], ["brace", "编辑支座"]])}
          </Cols>
          <GroupLabel>识别梁</GroupLabel>
        </Group>
        <Group $w={520}>
          <Cols $pl={2}>
            {big("smart", "智能布置", 60, 28, false, true)}
            {col([["yuan", "原位标注", 1], ["retake", "重提梁跨", 1], ["height", "查改标高"]], 87)}
            {col([["apply", "应用到同名梁"], ["refresh", "刷新支座尺寸"], ["span", "梁跨数据复制"]], 103)}
            {col([["side", "生成侧面筋"], ["stand", "生成架立筋"], ["arch", "设置拱梁", 1]], 90)}
            {col([["haunch", "生成梁加腋", 1], ["hanger", "生成吊筋"], ["chk", "显示吊筋"]], 98)}
            {col([["cat", "梁跨分类"]])}
          </Cols>
          <GroupLabel>梁二次编辑<Caret /></GroupLabel>
        </Group>
      </Ribbon>
      <ComboBar>
        <Combo $w={100} $ml={-30}><ComboText>工程普峰三期1#楼</ComboText><Caret $ml={2} /></Combo>
        <Combo $w={98}>首层<Caret /></Combo>
        <Combo $w={99}>梁<Caret /></Combo>
        <Combo $w={99}>梁<Caret /></Combo>
        <Combo $w={99}>L9(1)<Caret /></Combo>
        <Combo $w={99}>分层1<Caret /></Combo>
      </ComboBar>
      <Main>
        <LeftPanel>
          <Strip>×</Strip>
          <PanelHead>导航树</PanelHead>
          <LeftTools>
            <ToolBtn><Icon n="lst" /></ToolBtn>
            <ToolBtn><Icon n="win" /></ToolBtn>
          </LeftTools>
          <Tree>
            {leftTree.map(([k, t, ic, on]) =>
              k === 1 ? (
                <TreeItem key={t} $on={on}><Icon n={ic!} />{t}</TreeItem>
              ) : (
                <TreeHead key={t}>{t}{k === 2 && <New>NEW</New>}</TreeHead>
              )
            )}
          </Tree>
        </LeftPanel>
        <MidColumn>
          <MidPanel $h={421}>
            <Strip>×</Strip>
            <TabRow><PTab $on>构件列表</PTab><PTab>图纸管理</PTab></TabRow>
            <MidTools>
              <MidTool $w={62}><Icon n="new" />新建<Caret $ml={2} /></MidTool>
              <MidTool $w={52}><Icon n="doc" />复制</MidTool>
              <MidTool $w={52}><Icon n="cdel" />删除</MidTool>
              <MidTool $w={80}><Icon n="fcopy" />层间复制</MidTool>
              <More>▶▶</More>
            </MidTools>
            <SearchRow>搜索构件...<Icon n="search" s={12} /></SearchRow>
            <List>
              {["KL19(2)", "KL20(1)", "KL21(1)", "KL23(1)"].map(t => <ListRow key={t}>{t}</ListRow>)}
              <ListRow $head><Tri />非框架梁</ListRow>
              {["L1(1)", "L2(1)", "L3(1A)", "L4(1)", "L5(1)", "L6(1)", "L7(1)", "L8(1)", "L9(1)"].map(t => (
                <ListRow key={t} $on={t === "L9(1)"}>{t}</ListRow>
              ))}
            </List>
            <Thumb $t={208} $h={80} />
          </MidPanel>
          <MidPanel>
            <Strip>×</Strip>
            <TabRow><PTab $on>属性列表</PTab><PTab>图层管理</PTab></TabRow>
            <PropHead>
              <HCell /><HCell>属性名称</HCell><HCell>属性值</HCell><HCell>附加</HCell>
            </PropHead>
            {props.map((r, i) => (
              <PropRow key={i}>
                <Num>{r[0]}</Num>
                <Cell $blue={r[2]}>{r[1]}</Cell>
                <Cell>{r[3]}</Cell>
                <CheckCell>{r[4] && <Box />}</CheckCell>
              </PropRow>
            ))}
            <Thumb $t={49} $h={208} />
          </MidPanel>
        </MidColumn>
        <Center>
          <Canvas>
            <Drawing />
            <ViewBar>
              <ViewBtn $h={28}>
                <Svg width={26} height={26} viewBox="0 0 26 26">
                  <defs><radialGradient id="orb" cx=".35" cy=".3"><stop offset="0" stopColor="#fff" /><stop offset="1" stopColor="#6d747c" /></radialGradient></defs>
                  <circle cx={14} cy={11} r={9} fill="url(#orb)" />
                  <ellipse cx={12} cy={16} rx={10} ry={5} fill="url(#orb)" stroke="#777" />
                </Svg>
              </ViewBtn>
              <ViewBtn $h={36}><Cube fill="#8494aa" label="3D" /></ViewBtn>
              <ViewBtn $h={22}><Cube fill="#cfe4fb" /></ViewBtn>
              <ViewBtn $h={18}><Caret $ml={0} $c="#444" /></ViewBtn>
              <ViewBtn $h={20}><Cube fill="#8494aa" /></ViewBtn>
              <ViewBtn $h={20}><Caret $ml={0} $c="#444" /></ViewBtn>
              <ViewBtn $h={20}>
                <Svg width={26} height={26} viewBox="0 0 26 26" fill="none" stroke="#444" strokeWidth="1.6">
                  <path d="M21 6a10 10 0 1 0 2 8" />
                  <path d="M22 1v6h-6" />
                </Svg>
              </ViewBtn>
              <ViewBtn $h={18}><Caret $ml={0} $c="#444" /></ViewBtn>
              <ViewSep />
              <ViewBtn $h={30}>
                <Svg width={26} height={24} viewBox="0 0 26 24" fill="#8494aa" stroke="#444">
                  <rect x="2" y="2" width="22" height="20" />
                  <path d="M2 6h22M13 6v16M5 10h2M5 14h2M5 18h2M9 10h2M9 14h2M9 18h2M16 10h2M16 14h2M16 18h2M20 10h2M20 14h2M20 18h2" fill="none" />
                </Svg>
              </ViewBtn>
            </ViewBar>
            <Tip>截图(Alt + A)</Tip>
          </Canvas>
          <Grip />
          <Bottom>
            <Strip>x</Strip>
            <BHead>梁平法表格</BHead>
            <BTools>
              <BTool>复制跨数据</BTool>
              <BTool>粘贴跨数据</BTool>
              <BTool>输入当前列数据</BTool>
              <BTool>删除当前列数据</BTool>
              <BTool $on>页面设置</BTool>
              <BTool>调换起始跨</BTool>
              <BTool $on>悬臂钢筋代号</BTool>
            </BTools>
            <Matrix>
              {heads.map(([t, c, r], i) => <MCell key={i} $c={c} $r={r}>{t}</MCell>)}
            </Matrix>
          </Bottom>
        </Center>
        <RightPanel>
          <Strip />
          <RHead>显示设置</RHead>
          <RTabs><RTab $on>图元显示</RTab><RTab>楼层显示</RTab></RTabs>
          <LayerTable>
            <LayerHead><LayerHCell>图层构件</LayerHCell><LayerHCell>显示</LayerHCell></LayerHead>
            {layers.map(([lv, t, s], i) => (
              <LayerRow key={i}>
                <LayerName $lv={lv}>{lv < 2 && <Minus>−</Minus>}{t}</LayerName>
                <LayerCheck><Mark $s={s} /></LayerCheck>
              </LayerRow>
            ))}
          </LayerTable>
        </RightPanel>
        <Handle $x={435} />
        <Handle $x={1605} />
      </Main>
      <Ime>
        <ImeLogo>S</ImeLogo>
        <ImeBar>中<Svg width={14} height={14} viewBox="0 0 12 12"><path d="M8 0a6 6 0 1 1-7 9 7 7 0 0 0 7-9z" fill="#1e78dc" /></Svg><ImeDot /></ImeBar>
      </Ime>
    </Page>
  );
}
